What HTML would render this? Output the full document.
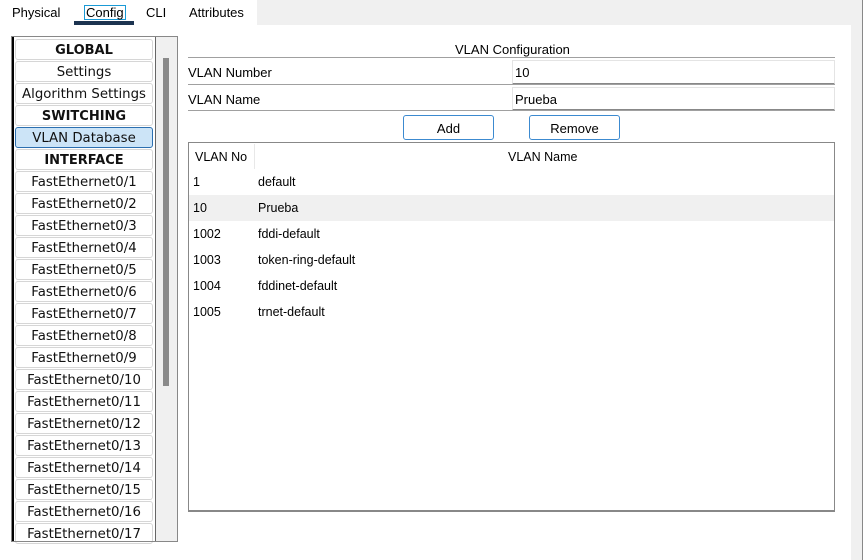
<!DOCTYPE html>
<html><head><style>
body{margin:0;width:863px;height:560px;background:#fff;position:relative;overflow:hidden;font-family:"Liberation Sans",Arial,sans-serif;font-size:13px;color:#000}
.a{position:absolute}
.tab{position:absolute;top:5px;font-size:13px}
.item{position:absolute;left:15px;width:136px;height:19px;border:1px solid #d6d6d6;border-radius:3px;background:#fff;text-align:center;font-family:"DejaVu Sans",sans-serif;font-size:13.3px;line-height:21px;color:#111;white-space:nowrap}
.b{font-weight:bold;font-size:13px}
.row{position:absolute;left:189px;width:645px;height:26px;line-height:27px;font-size:12.5px}
.row span{position:absolute}
.btn{position:absolute;top:115px;height:23px;border:1px solid #3c8ad0;border-radius:3px;background:#fff;text-align:center;line-height:25px;font-size:13px}
</style></head><body>
<div class="a" style="left:257px;top:0;width:606px;height:25px;background:#f0f0f0"></div>
<div class="a" style="left:851px;top:25px;width:12px;height:535px;background:#f0f0f0"></div>
<div class="a" style="left:862px;top:0;width:1px;height:560px;background:#888"></div>
<div class="a" style="left:0;top:541px;width:851px;height:19px;background:#fff"></div>
<div class="tab" style="left:12px">Physical</div>
<div class="tab" style="left:84px;top:5px;border:1px solid #1a9ad6;padding:0 1px;line-height:13px">Config</div>
<div class="a" style="left:74px;top:21px;width:60px;height:4px;background:#1c3350"></div>
<div class="tab" style="left:146px">CLI</div>
<div class="tab" style="left:189px">Attributes</div>

<div class="a" style="left:11px;top:36px;width:165px;height:504px;border:1px solid #888;background:#f0f0f0"></div>
<div class="a" style="left:12px;top:37px;width:141px;height:504px;border-left:2px solid #000;border-right:1px solid #666;background:#fff"></div>
<div class="a" style="left:163px;top:58px;width:6px;height:328px;background:#8a8a8a"></div>

<div class="item b" style="top:39px">GLOBAL</div>
<div class="item" style="top:61px">Settings</div>
<div class="item" style="top:83px">Algorithm Settings</div>
<div class="item b" style="top:105px">SWITCHING</div>
<div class="item" style="top:127px;background:#cce4f7;border-color:#2c6fb0">VLAN Database</div>
<div class="item b" style="top:149px">INTERFACE</div>
<div class="item" style="top:171px">FastEthernet0/1</div>
<div class="item" style="top:193px">FastEthernet0/2</div>
<div class="item" style="top:215px">FastEthernet0/3</div>
<div class="item" style="top:237px">FastEthernet0/4</div>
<div class="item" style="top:259px">FastEthernet0/5</div>
<div class="item" style="top:281px">FastEthernet0/6</div>
<div class="item" style="top:303px">FastEthernet0/7</div>
<div class="item" style="top:325px">FastEthernet0/8</div>
<div class="item" style="top:347px">FastEthernet0/9</div>
<div class="item" style="top:369px">FastEthernet0/10</div>
<div class="item" style="top:391px">FastEthernet0/11</div>
<div class="item" style="top:413px">FastEthernet0/12</div>
<div class="item" style="top:435px">FastEthernet0/13</div>
<div class="item" style="top:457px">FastEthernet0/14</div>
<div class="item" style="top:479px">FastEthernet0/15</div>
<div class="item" style="top:501px">FastEthernet0/16</div>
<div class="item" style="top:523px">FastEthernet0/17</div>
<div class="a" style="left:11px;top:541px;width:167px;height:1px;background:#888"></div>

<div class="a" style="left:455px;top:42px">VLAN Configuration</div>
<div class="a" style="left:188px;top:57px;width:647px;height:1px;background:#a0a0a0"></div>
<div class="a" style="left:188px;top:65px">VLAN Number</div>
<div class="a" style="left:512px;top:60px;width:321px;height:22px;border:1px solid #e4e4e4;border-bottom:2px solid #888"></div>
<div class="a" style="left:515px;top:65px">10</div>
<div class="a" style="left:188px;top:84px;width:647px;height:1px;background:#a0a0a0"></div>
<div class="a" style="left:188px;top:92px">VLAN Name</div>
<div class="a" style="left:512px;top:87px;width:321px;height:21px;border:1px solid #e4e4e4;border-bottom:2px solid #888"></div>
<div class="a" style="left:515px;top:92px">Prueba</div>
<div class="a" style="left:188px;top:110px;width:647px;height:1px;background:#a0a0a0"></div>
<div class="btn" style="left:403px;width:89px">Add</div>
<div class="btn" style="left:529px;width:89px">Remove</div>

<div class="a" style="left:188px;top:142px;width:645px;height:367px;border:1px solid #888;border-bottom:2px solid #888;background:#fff"></div>
<div class="a" style="left:254px;top:144px;width:1px;height:25px;background:#e8e8e8"></div>
<div class="a" style="left:195px;top:150px;font-size:12.5px">VLAN No</div>
<div class="a" style="left:508px;top:150px;font-size:12.5px">VLAN Name</div>
<div class="row" style="top:169px"><span style="left:4px">1</span><span style="left:69px">default</span></div>
<div class="row" style="top:195px;background:#f0f0f0"><span style="left:4px">10</span><span style="left:69px">Prueba</span></div>
<div class="row" style="top:221px"><span style="left:4px">1002</span><span style="left:69px">fddi-default</span></div>
<div class="row" style="top:247px"><span style="left:4px">1003</span><span style="left:69px">token-ring-default</span></div>
<div class="row" style="top:273px"><span style="left:4px">1004</span><span style="left:69px">fddinet-default</span></div>
<div class="row" style="top:299px"><span style="left:4px">1005</span><span style="left:69px">trnet-default</span></div>
</body></html>
